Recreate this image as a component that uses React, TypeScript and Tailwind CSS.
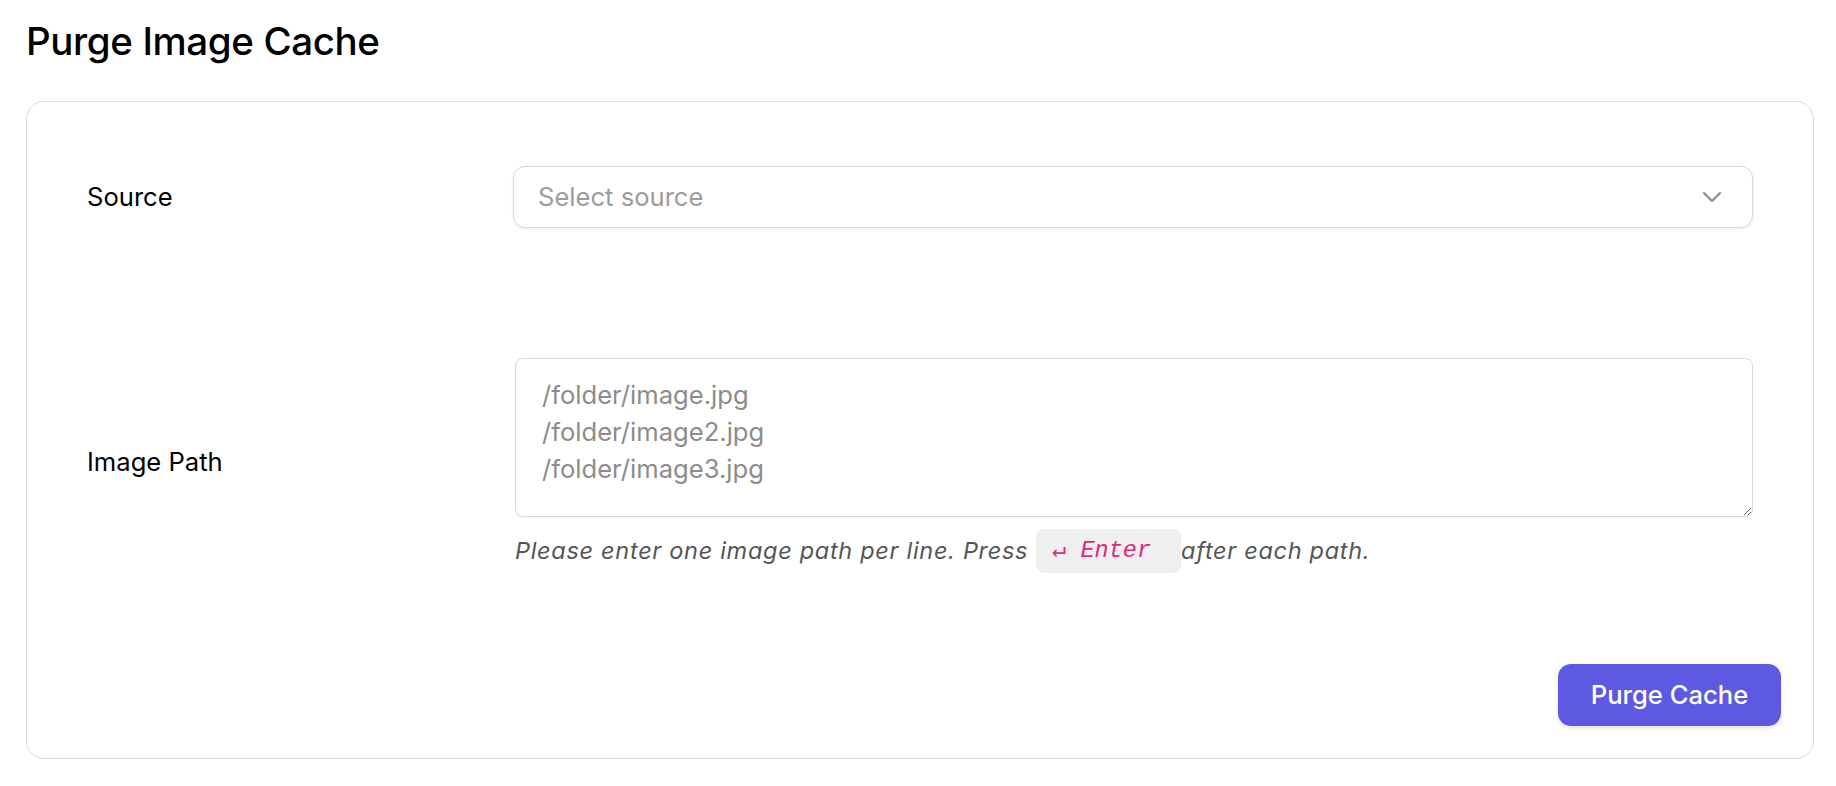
import React from "react";

export default function App() {
  return (
    <div className="min-h-screen bg-white pl-[26px] pr-[22px] font-['Inter','Noto_Sans',sans-serif] text-black">
      <h1 className="pt-[20px] text-[38.5px] font-medium leading-[42px] tracking-[-0.01em]">
        Purge Image Cache
      </h1>
      <div className="mt-[39px] rounded-[18px] border border-[#dcdcdc] bg-white">
        <div className="px-[60px] pt-[64px]">
          <div className="flex h-[62px] items-center">
            <div className="w-[426px] text-[25.6px] leading-[32px]">Source</div>
            <div className="flex h-[62px] flex-1 items-center justify-between rounded-[12px] border border-[#d9d9d9] bg-white pl-[24px] pr-[30px] shadow-[0_1px_3px_rgba(0,0,0,0.08)]">
              <span className="text-[25.6px] leading-[32px] text-[#9c9c9c]">Select source</span>
              <svg width="20" height="12" viewBox="0 0 20 12" fill="none">
                <polyline points="2,2 10,10 18,2" stroke="#8c8c8c" strokeWidth="2.2" strokeLinecap="round" strokeLinejoin="round" />
              </svg>
            </div>
          </div>
          <div className="mt-[130px] flex items-center">
            <div className="mb-[7px] w-[426px] text-[25.6px] leading-[32px]">Image Path</div>
            <div className="flex-1 pl-[2px]">
              <textarea
                className="block h-[159px] w-full rounded-[8px] border border-[#d9d9d9] bg-white pl-[26px] pr-[20px] pt-[17px] text-[25.6px] leading-[37px] text-black shadow-[0_1px_2px_rgba(0,0,0,0.06)] outline-none placeholder:text-[#8c8c8c]"
                placeholder={"/folder/image.jpg\n/folder/image2.jpg\n/folder/image3.jpg"}
              />
              <div className="mt-[12px] flex h-[44px] items-center text-[23.5px] italic tracking-[0.03em] text-[#555555]">
                <span>Please enter one image path per line. Press</span>
                <span className="ml-[8px] flex h-[44px] items-center whitespace-pre rounded-[8px] bg-[#efefef] px-[16px] font-['Liberation_Mono','DejaVu_Sans_Mono',monospace] text-[23.5px] italic tracking-normal text-[#dd2a7b]">
                  {"↵ Enter "}
                </span>
                <span>after each path.</span>
              </div>
            </div>
          </div>
        </div>
        <div className="flex justify-end pb-[32px] pr-[32px] pt-[91px]">
          <button className="h-[62px] w-[223px] rounded-[13px] bg-[#5e59e1] text-[25.6px] font-medium text-white shadow-[0_2px_4px_rgba(0,0,0,0.12)]">
            Purge Cache
          </button>
        </div>
      </div>
    </div>
  );
}
